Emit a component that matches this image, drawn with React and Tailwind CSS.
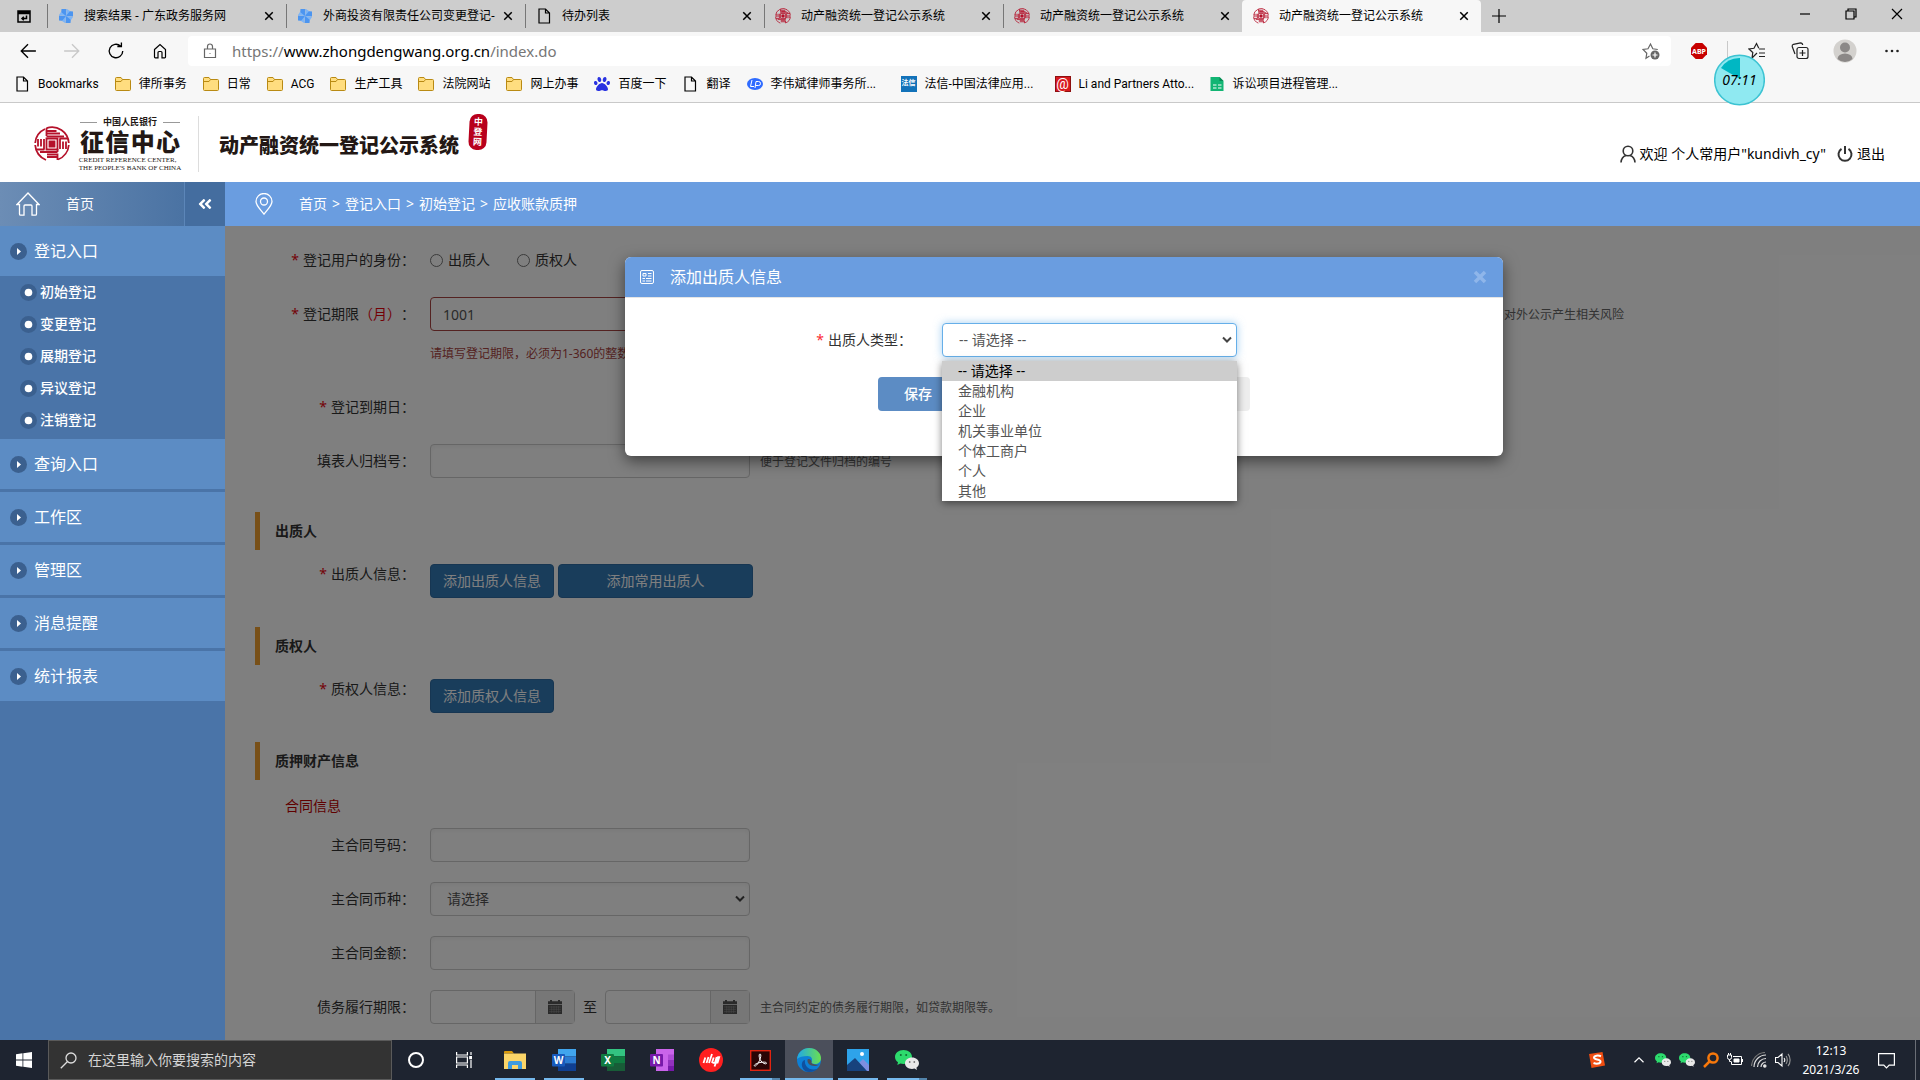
import { useState } from "react";
import clsx from "clsx";
import { FaAngleDoubleLeft, FaPaw } from "react-icons/fa";

const ICON_PATHS = {
  back: "M15 8H2M8 2L2 8l6 6",
  forward: "M1 8h13M8 2l6 6-6 6",
  plus: "M8 1v14M1 8h14",
  close: "M3 3l10 10M13 3L3 13",
  minimize: "M3 8h10",
  restore: "M3 5h8v8H3zM5 5V3h8v8h-2",
  home: "M2.5 6.5L8 1.5l5.5 5V14a.8.8 0 0 1-.8.8H10V9.5a1 1 0 0 0-1-1H7a1 1 0 0 0-1 1v5.3H3.3a.8.8 0 0 1-.8-.8z",
  lock: "M2.5 6h11v8.5h-11zM5.5 6V3.5a2.5 2.5 0 0 1 5 0V6M8 10v.8",
  reload: "M14 8a6 6 0 1 1-2-4.5M12.8 0.5v3.5H9.2",
  page: "M3 1h6.5L13.5 5v10H3zM9.5 1v4h4",
  tabs: "M2 3h12v11H2zM2 5.5h12M2 4h12M10.5 7.5v3H6M7.8 8.8L6 10.5l1.8 1.7",
  chevron: "M2 11l6-6 6 6",
};

function Line({ name, className = "size-4", width = 1.2 }) {
  return (
    <svg viewBox="0 0 16 16" className={clsx("shrink-0", className)} fill="none" stroke="currentColor" strokeWidth={width}>
      <path d={ICON_PATHS[name]} />
    </svg>
  );
}

function Emblem({ className = "size-4" }) {
  return (
    <svg viewBox="0 0 36 36" className={clsx("shrink-0", className)} fill="none" stroke="#b5122b" strokeWidth="1.8">
      <path d="M11 3A16.800 16.800 0 0 0 1.200 17M1.200 19A16.800 16.800 0 0 0 12 34M24 33.500A16.800 16.800 0 0 0 34.800 19M34.800 17A16.800 16.800 0 0 0 12.500 2.100" />
      <path d="M12.500 12.500h11v11h-11z" />
      <path d="M15.500 15.500h5v5h-5z" fill="#b5122b" />
      <path d="M12.500 2v5.500H23M12.500 5h10M12.500 10.500H30M26 7.500H15M12.500 10V8" />
      <path d="M25.500 12.500H34M26 12.500V23M29 15.500V23M32 15.500V23" />
      <path d="M23.500 34v-5.500H13M23.500 31H13M23.500 26H6M23.500 23v3" />
      <path d="M10.500 23.500H2M10 23.500V13M7 20.500V13M4 20.500V13" />
    </svg>
  );
}

function Pinwheel() {
  return (
    <svg viewBox="0 0 16 16" className="size-4 shrink-0">
      <g fill="#4c95f0">
        <path d="M3.500 1h5L8 8 3 6zM15 3.500v5L8 8l2-5zM12.500 15h-5L8 8l5 2zM1 12.500v-5L8 8l-2 5z" />
      </g>
      <g fill="#7db5f7">
        <path d="M9 1l3 2L8 8zM15 9l-2 3L8 8zM7 15l-3-2L8 8zM1 7l2-3L8 8z" />
      </g>
    </svg>
  );
}

function Folder() {
  return (
    <svg viewBox="0 0 16 16" className="size-4 shrink-0" stroke="#b98a13" strokeWidth="1">
      <path d="M.5 2.500A1 1 0 0 1 1.500 1.500h4.500l1.500 2h7a1 1 0 0 1 1 1v9a1 1 0 0 1-1 1h-13a1 1 0 0 1-1-1z" fill="#ffdd7f" />
      <path d="M1 5.500h5l1.500-2" fill="none" />
    </svg>
  );
}

function BookmarkIcon({ kind }) {
  if (kind === "folder") return <Folder />;
  if (kind === "page") return <Line name="page" />;
  if (kind === "baidu") return <FaPaw className="size-4 shrink-0 text-[#2932e1]" />;
  if (kind === "lp")
    return (
      <svg viewBox="0 0 16 16" className="size-4 shrink-0">
        <ellipse cx="8" cy="8" rx="8" ry="6" fill="#2f6bff" />
        <path d="M5 4L3.500 10.500H7M8 12l1-6.500h2.500a1.500 1.500 0 0 1 0 4H8.500" stroke="#fff" fill="none" />
      </svg>
    );
  if (kind === "faxin")
    return <span className="flex size-4 shrink-0 items-center justify-center bg-[#1272b9] text-[7px] font-bold text-white">法信</span>;
  if (kind === "at")
    return <span className="flex size-4 shrink-0 items-center justify-center border border-[#8d1010] bg-[#d8191f] text-sm leading-none text-white">@</span>;
  return (
    <svg viewBox="0 0 16 16" className="size-4 shrink-0">
      <path d="M1.500 1h9l4 4v10h-13z" fill="#12b573" />
      <path d="M10.500 1l4 4h-4z" fill="#078a54" />
      <path d="M4 9h3.500M9 9h3.500M4 12h3.500M9 12h3.500" stroke="#fff" />
    </svg>
  );
}

const tabs = [
  { title: "搜索结果 - 广东政务服务网", icon: "pin" },
  { title: "外商投资有限责任公司变更登记-", icon: "pin" },
  { title: "待办列表", icon: "page" },
  { title: "动产融资统一登记公示系统", icon: "emblem" },
  { title: "动产融资统一登记公示系统", icon: "emblem" },
  { title: "动产融资统一登记公示系统", icon: "emblem", active: true },
];

const bookmarks = [
  ["page", "Bookmarks"],
  ["folder", "律所事务"],
  ["folder", "日常"],
  ["folder", "ACG"],
  ["folder", "生产工具"],
  ["folder", "法院网站"],
  ["folder", "网上办事"],
  ["baidu", "百度一下"],
  ["page", "翻译"],
  ["lp", "李伟斌律师事务所..."],
  ["faxin", "法信-中国法律应用..."],
  ["at", "Li and Partners Atto..."],
  ["sheet", "诉讼项目进程管理..."],
];

function TabStrip() {
  return (
    <div className="flex h-8 items-stretch bg-[#cdcdcd]">
      <button aria-label="标签操作" className="flex w-[47px] items-center justify-center">
        <Line name="tabs" width={1.5} />
      </button>
      {tabs.map((tab, i) => (
        <div
          key={i}
          className={clsx("flex w-[239px] min-w-0 items-center", tab.active && "rounded-t bg-[#f7f7f7]")}
        >
          <div className={clsx("flex h-6 w-full min-w-0 items-center border-l pr-[7px] pl-[10px]", tab.active ? "border-transparent" : "border-[#777]")}>
            {tab.icon === "pin" && <Pinwheel />}
            {tab.icon === "page" && <Line name="page" />}
            {tab.icon === "emblem" && <Emblem />}
            <span className="ml-[10px] flex-1 text-xs whitespace-nowrap">{tab.title}</span>
            <button aria-label="关闭标签" className="flex size-5 shrink-0 items-center justify-center">
              <Line name="close" className="size-3" width={2} />
            </button>
          </div>
        </div>
      ))}
      <button aria-label="新标签" className="flex w-9 items-center justify-center">
        <Line name="plus" />
      </button>
      <div className="ml-auto flex h-7 items-center">
        <button aria-label="最小化" className="flex w-[46px] justify-center"><Line name="minimize" /></button>
        <button aria-label="还原" className="flex w-[46px] justify-center"><Line name="restore" /></button>
        <button aria-label="关闭" className="flex w-[46px] justify-center"><Line name="close" /></button>
      </div>
    </div>
  );
}

function Toolbar() {
  return (
    <div className="relative flex h-[38px] items-center bg-[#f7f7f7] pl-[6px]">
      <button aria-label="后退" className="flex w-11 justify-center"><Line name="back" className="size-[18px]" /></button>
      <button aria-label="前进" className="flex w-11 justify-center text-[#c8c8c8]"><Line name="forward" className="size-[18px]" /></button>
      <button aria-label="刷新" className="flex w-11 justify-center"><Line name="reload" className="size-[18px]" /></button>
      <button aria-label="主页" className="flex w-11 justify-center"><Line name="home" /></button>
      <div className="ml-[6px] flex h-[30px] flex-1 items-center rounded bg-white pr-[11px] pl-[14px]">
        <Line name="lock" className="size-4 text-[#666]" />
        <a href="https://www.zhongdengwang.org.cn/index.do" className="ml-[14px] text-[15px] text-[#767676]">
          https://<span className="text-black">www.zhongdengwang.org.cn</span>/index.do
        </a>
        <svg viewBox="0 0 18 18" className="ml-auto size-[18px]" fill="none" stroke="#666" strokeWidth="1.2">
          <path d="M7.500 14L4 16.200l.8-5L1 7.500l5-.7L8.500 2l2.300 4.800 5 .7" />
          <circle cx="13" cy="13" r="4.500" fill="#666" stroke="none" />
          <path d="M13 10.500v5M10.500 13h5" stroke="#fff" />
        </svg>
      </div>
      <div className="flex w-[249px] items-center">
        <svg viewBox="0 0 16 16" className="ml-5 size-4">
          <path d="M4.700 0h6.600L16 4.700v6.600L11.300 16H4.700L0 11.300V4.700z" fill="#c70000" />
          <text x="8" y="11" textAnchor="middle" fontSize="7" fontWeight="700" fill="#fff">ABP</text>
        </svg>
        <span className="ml-5 h-5 w-px bg-[#c9c9c9]" />
        <svg viewBox="0 0 18 18" className="ml-5 size-[18px]" fill="none" stroke="#222" strokeWidth="1.2">
          <path d="M9 11l-5 5 .8-5.500L1 7l5-.7L8.500 1.500l2.300 4.800M11 7h6M11 11h6M11 14.500h6" />
        </svg>
        <svg viewBox="0 0 18 18" className="ml-[25px] size-[18px]" fill="none" stroke="#222" strokeWidth="1.2">
          <rect x="6" y="5.500" width="11" height="11" rx="2" />
          <path d="M11.500 8v6M8.500 11h6M4 12L1.200 4.500a2 2 0 0 1 1.300-2.200l7-1.500c1 0 2 .5 2.200 2.200" />
        </svg>
        <svg viewBox="0 0 24 24" className="ml-6 size-6">
          <circle cx="12" cy="12" r="11.500" fill="#d3d1ce" />
          <circle cx="12" cy="8.500" r="5" fill="#8b8887" />
          <path d="M4.500 20a7.500 5.500 0 0 1 15 0 11 11 0 0 1-15 0z" fill="#8b8887" />
        </svg>
        <svg viewBox="0 0 16 16" className="ml-[27px] size-4" fill="#222">
          <circle cx="2.500" cy="8" r="1.300" /><circle cx="8" cy="8" r="1.300" /><circle cx="13.500" cy="8" r="1.300" />
        </svg>
      </div>
      {/* floating countdown */}
      <div className="absolute top-[22px] right-[155px] z-30 flex h-[52px] w-[51px] items-center justify-center">
        <svg viewBox="0 0 51 52" className="absolute inset-0 h-full w-full">
          <circle cx="25.500" cy="26" r="24.800" fill="#8fe9f1" stroke="#3cc3d2" strokeWidth="1.500" />
          <path d="M26 25V4A22 22 0 0 0 7 14z" fill="#00b7c3" />
        </svg>
        <span className="relative text-sm leading-4 italic">07:11</span>
      </div>
    </div>
  );
}

function Bookmarks() {
  return (
    <nav className="flex h-[33px] items-center gap-4 border-b border-[#c9c9c9] bg-[#f7f7f7] pb-1 pl-[14px] [font-family:Roboto,'Noto_Sans_CJK_SC',sans-serif]">
      {bookmarks.map(([kind, label]) => (
        <a key={label} href="#" className="flex items-center gap-2 text-xs whitespace-nowrap">
          <BookmarkIcon kind={kind} />
          <span className={clsx(label.endsWith("...") && "w-[114px]")}>{label}</span>
        </a>
      ))}
    </nav>
  );
}

function SiteHeader() {
  return (
    <header className="flex h-[79px] items-center bg-white pt-[3px] pr-[35px] pl-[34px]">
      <Emblem className="size-9" />
      <div className="ml-[10px] flex w-[100px] flex-col items-center text-[#231815]">
        <div className="flex w-full items-center gap-[6px] text-[9px] leading-3 font-bold">
          <span className="h-px flex-1 bg-[#999]" />中国人民银行<span className="h-px flex-1 bg-[#999]" />
        </div>
        <div className="flex w-full justify-between text-2xl leading-[28px] font-black">
          <span>征</span><span>信</span><span>中</span><span>心</span>
        </div>
        <div className="[font-family:'Liberation_Serif',serif] text-[7px] leading-[8px] font-medium whitespace-nowrap">
          CREDIT REFERENCE CENTER,
          <br />
          THE PEOPLE'S BANK OF CHINA
        </div>
      </div>
      <span className="ml-[18px] h-14 w-px bg-[#ddd]" />
      <h1 className="mt-1 ml-5 text-xl font-black text-[#231815]">动产融资统一登记公示系统</h1>
      <div className="mb-6 ml-[10px] flex h-9 w-[18px] rotate-3 flex-col items-center justify-center rounded-[8px] bg-[#b8001c] text-[9px] leading-[10px] font-bold text-white">
        <span>中</span><span>登</span><span>网</span>
      </div>
      <div className="mt-5 ml-auto flex items-center text-sm">
        <svg viewBox="0 0 16 18" className="mr-1 h-[18px] w-4" fill="none" stroke="#333" strokeWidth="1.6">
          <circle cx="8" cy="6" r="4.800" />
          <path d="M1 17.500c.3-4 2.500-6.300 5-7M15 17.500c-.3-4-2.500-6.300-5-7" />
        </svg>
        欢迎 个人常用户"kundivh_cy"
        <a href="#" className="ml-[11px] flex items-center gap-1">
          <svg viewBox="0 0 16 16" className="size-4" fill="none" stroke="#333" strokeWidth="2">
            <path d="M4.500 2.800a6.500 6.500 0 1 0 7 0M8 0v8" />
          </svg>
          退出
        </a>
      </div>
    </header>
  );
}

const subItems = ["初始登记", "变更登记", "展期登记", "异议登记", "注销登记"];

function MenuItem({ label }) {
  return (
    <a href="#" className="flex h-[50px] items-center gap-[7px] bg-[#5c8cc4] pl-[10px] text-base text-white">
      <svg viewBox="0 0 17 17" className="size-[17px]">
        <circle cx="8.500" cy="8.500" r="8.500" fill="#3b608f" />
        <path d="M7 5l4 3.500L7 12z" fill="#fff" />
      </svg>
      {label}
    </a>
  );
}

function Sidebar() {
  return (
    <aside className="w-[225px] shrink-0 bg-[#4a74a8]">
      <div className="flex h-11 items-center bg-linear-to-r from-[#6c8db5] to-[#436d9f] text-sm text-white">
        <a href="#" className="flex flex-1 items-center gap-[26px] pl-4">
          <svg viewBox="0 0 24 24" className="size-6" fill="none" stroke="#fff" strokeWidth="1.3">
            <path d="M3.500 12.500H1L12 1l11 11.500h-2.500V22a1.200 1.200 0 0 1-1.200 1.200H16V14a1 1 0 0 0-1-1H9a1 1 0 0 0-1 1v9.200H4.700A1.200 1.200 0 0 1 3.500 22z" />
          </svg>
          首页
        </a>
        <button aria-label="收起菜单" className="flex h-full w-[41px] items-center justify-center border-l border-[#5c86b8] bg-[#446d9f]">
          <FaAngleDoubleLeft className="size-4" />
        </button>
      </div>
      <MenuItem label="登记入口" />
      <ul className="pb-[3px]">
        {subItems.map((label) => (
          <li key={label}>
            <a href="#" className="flex h-8 items-center gap-[3px] pl-5 text-sm font-medium text-white">
              <svg viewBox="0 0 17 17" className="size-[17px]">
                <circle cx="8.500" cy="8.500" r="8.500" fill="#3b608f" />
                <circle cx="8.500" cy="8.500" r="3.800" fill="#fff" />
              </svg>
              {label}
            </a>
          </li>
        ))}
      </ul>
      <div className="flex flex-col gap-[3px]">
        {["查询入口", "工作区", "管理区", "消息提醒", "统计报表"].map((label) => (
          <MenuItem key={label} label={label} />
        ))}
      </div>
    </aside>
  );
}

const inputClass = "h-[34px] rounded border border-[#ccc] bg-white px-3 text-sm text-[#555] shadow-inner";

function Row({ label, id, required, children, top }) {
  return (
    <div className={clsx("flex gap-[15px] text-sm text-[#333]", top ? "items-start" : "items-center")}>
      <label htmlFor={id} className={clsx("w-[190px] shrink-0 text-right", top || "leading-[34px]")}>
        {required && <span className="mr-1 text-red-600">*</span>}
        {label}：
      </label>
      {children}
    </div>
  );
}

function Section({ children, className }) {
  return (
    <h2 className={clsx("ml-[30px] flex h-[38px] items-center border-l-[5px] border-[#f0a030] pl-[15px] text-sm font-bold text-[#333]", className)}>
      {children}
    </h2>
  );
}

function SelectArrow({ className }) {
  return (
    <svg viewBox="0 0 10 8" className={clsx("pointer-events-none absolute h-2 w-[10px]", className)} fill="none" stroke="#444" strokeWidth="2">
      <path d="M1 1.500l4 4 4-4" />
    </svg>
  );
}

function DateField({ id, label }) {
  return (
    <div className="flex h-[34px] rounded border border-[#ccc]">
      <input id={id} aria-label={label} className="w-[104px] px-3" />
      <button aria-label="选择日期" className="flex w-[39px] items-center justify-center border-l border-[#ccc] bg-[#eee]">
        <svg viewBox="0 0 14 14" className="size-[14px]">
          <path d="M0 1.200h2V0h2v1.200h6V0h2v1.200h2V4H0zM0 4.700h14V14H0z" fill="#555" />
          <path d="M1 7h12M1 9.300h12M1 11.600h12M3.700 6v7M6 6v7M8.300 6v7M10.600 6v7" stroke="#999" strokeWidth=".5" />
        </svg>
      </button>
    </div>
  );
}

const primaryBtn = "h-[34px] rounded border border-[#2e6da4] bg-[#337ab7] text-sm text-white";

function RegisterForm() {
  return (
    <form className="pt-[17px] pb-4" onSubmit={(e) => e.preventDefault()}>
      <div className="flex flex-col gap-5">
        <Row label="登记用户的身份" required>
          <label className="flex items-center gap-[5px]">
            <input type="radio" name="role" className="size-[13px]" />出质人
          </label>
          <label className="ml-3 flex items-center gap-[5px]">
            <input type="radio" name="role" className="size-[13px]" />质权人
          </label>
        </Row>
        <div>
          <Row label={<>登记期限<span className="text-red-600">（月）</span></>} id="term" required>
            <input id="term" defaultValue="1001" className="h-[34px] w-[320px] rounded border border-[#a94442] px-3 text-sm text-[#555]" />
            <span className="w-[859px] pt-[2px] text-right text-xs text-[#666]">对外公示产生相关风险</span>
          </Row>
          <p className="ml-[205px] flex h-[39px] items-center pt-[6px] text-xs text-[#a94442]">请填写登记期限，必须为1-360的整数</p>
        </div>
        <Row label="登记到期日" required />
        <div className="flex items-center gap-[10px]">
          <Row label="填表人归档号" id="archive">
            <input id="archive" className={clsx(inputClass, "w-[320px]")} />
          </Row>
          <span className="pt-[2px] text-xs text-[#666]">便于登记文件归档的编号</span>
        </div>
      </div>

      <Section className="mt-[34px] mb-[14px]">出质人</Section>
      <Row label="出质人信息" required top>
        <div className="flex gap-1">
          <button className={clsx(primaryBtn, "w-[124px]")}>添加出质人信息</button>
          <button className={clsx(primaryBtn, "w-[195px]")}>添加常用出质人</button>
        </div>
      </Row>

      <Section className="mt-[29px] mb-[14px]">质权人</Section>
      <Row label="质权人信息" required top>
        <button className={clsx(primaryBtn, "w-[124px]")}>添加质权人信息</button>
      </Row>

      <Section className="mt-[29px]">质押财产信息</Section>
      <h3 className="ml-[60px] flex h-12 items-center pt-1 text-sm text-[#c00000]">合同信息</h3>
      <div className="flex flex-col gap-5">
        <Row label="主合同号码" id="contractNo">
          <input id="contractNo" className={clsx(inputClass, "w-[320px]")} />
        </Row>
        <Row label="主合同币种" id="currency">
          <div className="relative">
            <select id="currency" className={clsx(inputClass, "w-[320px] appearance-none pl-4")}>
              <option>请选择</option>
            </select>
            <SelectArrow className="top-[13px] right-[5px]" />
          </div>
        </Row>
        <Row label="主合同金额" id="amount">
          <input id="amount" className={clsx(inputClass, "w-[320px]")} />
        </Row>
        <Row label="债务履行期限" id="from">
          <div className="flex items-center">
            <DateField id="from" label="开始日期" />
            <span className="mx-2">至</span>
            <DateField id="to" label="结束日期" />
            <span className="ml-[10px] pt-[2px] text-xs text-[#666]">主合同约定的债务履行期限，如贷款期限等。</span>
          </div>
        </Row>
      </div>
    </form>
  );
}

const pledgorTypes = ["-- 请选择 --", "金融机构", "企业", "机关事业单位", "个体工商户", "个人", "其他"];

function PledgorModal() {
  const [type, setType] = useState(pledgorTypes[0]);

  return (
    <div className="absolute inset-0 flex items-start justify-center bg-black/50 pt-[31px] pr-[17px]">
      <div role="dialog" aria-label="添加出质人信息" className="w-[878px] rounded-md bg-white shadow-[0_5px_15px_rgba(0,0,0,0.5)]">
        <div className="flex h-10 items-center rounded-t-md bg-[#6a9de0] px-[15px] text-base text-white">
          <svg viewBox="0 0 14 14" className="mr-4 size-[14px]" fill="none" stroke="#fff">
            <rect x=".5" y=".5" width="13" height="13" rx="1.5" />
            <path d="M3 3.500h3v2.500H3zM8 3.500h3.500M8 6h3.500M2.500 8.500H5M6 8.500h5.500M2.500 11H5M6 11h5.500" />
          </svg>
          添加出质人信息
          <button aria-label="关闭对话框" className="ml-auto text-[#8fb6ea]">
            <Line name="close" width={3.5} />
          </button>
        </div>
        <div className="h-[159px] border-t border-[#e5e5e5] pt-[25px]">
          <div className="flex items-center text-sm text-[#333]">
            <label htmlFor="pledgorType" className="w-[287px] text-right">
              <span className="mr-1 text-red-500">*</span>出质人类型：
            </label>
            <div className="relative ml-[30px]">
              <select
                id="pledgorType"
                value={type}
                onChange={(e) => setType(e.target.value)}
                className="block h-[34px] w-[295px] appearance-none rounded border border-[#66afe9] bg-white px-4 text-sm text-[#555] shadow-[0_0_8px_rgba(102,175,233,0.6)]"
              >
                {pledgorTypes.map((t) => (
                  <option key={t}>{t}</option>
                ))}
              </select>
              <SelectArrow className="top-[13px] right-[5px]" />
              <ul className="absolute top-[38px] left-0 z-10 w-full bg-white text-sm leading-5 text-[#555] shadow-[0_2px_8px_rgba(0,0,0,0.5)]">
                {pledgorTypes.map((t) => (
                  <li key={t} onClick={() => setType(t)} className={clsx("px-4", t === type && "bg-[#cdcdcd] text-black")}>
                    {t}
                  </li>
                ))}
              </ul>
            </div>
          </div>
          <div className="mt-5 ml-[253px] flex w-[372px] justify-between text-sm">
            <button className="h-[34px] w-20 rounded bg-[#5c8cc4] font-medium text-white">保存</button>
            <button aria-label="取消" className="h-[34px] w-20 rounded bg-[#eee]" />
          </div>
        </div>
      </div>
    </div>
  );
}

function Office({ letter, light, mid, dark, badge }) {
  return (
    <svg viewBox="0 0 24 22" className="h-[22px] w-6">
      <path d="M6 0h18v7.300H6z" fill={light} />
      <path d="M6 7.300h18v7.400H6z" fill={mid} />
      <path d="M6 14.700h18V22H6z" fill={dark} />
      <rect y="5" width="13" height="12.500" rx="1" fill={badge} />
      <text x="6.500" y="15" textAnchor="middle" fontSize="10" fontWeight="700" fill="#fff">{letter}</text>
    </svg>
  );
}

function WeChat({ className }) {
  return (
    <svg viewBox="0 0 24 20" className={className}>
      <path d="M8.500 0C3.500 0 0 3.200 0 7c0 2.200 1.200 4 3 5.300L2.300 15l3-1.500c1 .3 2 .5 3.200.5 5 0 8.500-3 8.500-7s-3.500-7-8.500-7z" fill="#2ddb6d" />
      <circle cx="5.800" cy="5" r="1" fill="#116b32" /><circle cx="11.200" cy="5" r="1" fill="#116b32" />
      <path d="M17 7.500c-4 0-7 2.600-7 5.800S13 19 17 19c.9 0 1.700-.1 2.500-.4L22 20l-.6-2.300c1.600-1 2.600-2.600 2.600-4.400 0-3.200-3-5.800-7-5.800z" fill="#e9e9e9" />
      <circle cx="14.700" cy="12" r=".9" fill="#777" /><circle cx="19.300" cy="12" r=".9" fill="#777" />
    </svg>
  );
}

const apps = [
  {
    name: "文件资源管理器",
    open: true,
    icon: (
      <svg viewBox="0 0 22 19" className="h-[19px] w-[22px]">
        <path d="M0 1a1 1 0 0 1 1-1h7l2 2.500H0z" fill="#d99a0b" />
        <path d="M0 2.500h22V18H0z" fill="#fbd568" />
        <path d="M4 18v-6a2 2 0 0 1 2-2h10a2 2 0 0 1 2 2v6h-4v-4H8v4z" fill="#3d9be0" />
      </svg>
    ),
  },
  { name: "Word", open: true, icon: <Office letter="W" light="#41a5ee" mid="#2b7cd3" dark="#103f91" badge="#185abd" /> },
  { name: "Excel", icon: <Office letter="X" light="#33c481" mid="#107c41" dark="#185c37" badge="#107c41" /> },
  {
    name: "OneNote",
    icon: (
      <svg viewBox="0 0 24 22" className="h-[22px] w-6">
        <path d="M6 0h18v22H6z" fill="#ca64ea" />
        <path d="M18 5.500h6V11h-6z" fill="#ae4bd5" />
        <path d="M18 11h6v5.500h-6z" fill="#9332bf" />
        <path d="M18 16.500h6V22h-6z" fill="#7719aa" />
        <rect y="5" width="13" height="12.500" rx="1" fill="#7719aa" />
        <text x="6.500" y="15" textAnchor="middle" fontSize="10" fontWeight="700" fill="#fff">N</text>
      </svg>
    ),
  },
  {
    name: "红圈",
    icon: (
      <svg viewBox="0 0 24 24" className="size-6">
        <circle cx="12" cy="12" r="12" fill="#ff1f1f" />
        <path d="M4.500 15l1.800-5.500M7.500 15l2-6M10 15l3-9M13 15l1.700-5.500M13.500 14.800h2.500l1.700-5.800M15.500 18.500L19 9.200h1.200l-1.600 5.300h-1" stroke="#fff" strokeWidth="1.800" fill="none" />
      </svg>
    ),
  },
  {
    name: "Acrobat",
    open: true,
    stacked: true,
    icon: (
      <svg viewBox="0 0 21 21" className="size-[21px]">
        <rect x=".7" y=".7" width="19.600" height="19.600" fill="#2a0505" stroke="#e02411" strokeWidth="1.400" />
        <path d="M10 4c1.500 0 .8 3.500-.5 6.500S5.500 17 4.500 16s2-2.800 5.500-3.500 7-.5 6.500.8-3.500.2-5.500-2.300S8.500 4 10 4z" fill="none" stroke="#fff" />
      </svg>
    ),
  },
  {
    name: "Edge",
    open: true,
    active: true,
    icon: (
      <svg viewBox="0 0 24 24" className="size-6">
        <defs>
          <linearGradient id="edgeTop" x1="0" x2="1">
            <stop offset="0" stopColor="#1fa7e8" />
            <stop offset="1" stopColor="#6be04f" />
          </linearGradient>
        </defs>
        <circle cx="12" cy="12" r="12" fill="#0d7fd6" />
        <path d="M0 11C1 4 6 0 12 0c7 0 12 5 12 10 0 4-3 6-6 6-3 0-4-1-3.500-2 1.500-3 0-6-4-6C6 8 2 9 0 11z" fill="url(#edgeTop)" />
        <path d="M8 12c-1 5 3 10 9 9.500 2 0 4-1 5-2C20 22 16 24 12 24 7 24 4 19 5 15c.5-2 2-3 3-3z" fill="#10509f" />
        <path d="M10.500 12c-.5 3 2.500 6 7 6 2 0 4-.7 5-1.500-1 .3-3 .5-4.500 0-2.500-.5-4-1.500-3.500-2.500.8-2-3.500-4.500-4-2z" fill="#4b4f5b" />
      </svg>
    ),
  },
  {
    name: "照片",
    open: true,
    icon: (
      <svg viewBox="0 0 22 22" className="size-[22px]">
        <path d="M0 0h22v22H0z" fill="#2ea3ea" />
        <path d="M12 14l4-4 6 6v6H12z" fill="#7d8ee0" />
        <path d="M0 16l8-7 12 13H0z" fill="#17427d" />
        <circle cx="15" cy="5" r="2" fill="#fff" />
      </svg>
    ),
  },
  { name: "微信", open: true, stacked: true, icon: <WeChat className="h-5 w-6" /> },
];

function Taskbar() {
  return (
    <footer className="flex h-10 items-stretch bg-[#1e2430] text-white">
      <button aria-label="开始" className="flex w-12 items-center justify-center">
        <svg viewBox="0 0 16 16" className="size-4" fill="#fff">
          <path d="M0 2.200L6.500 1.300v6.300H0zM7.300 1.200L16 0v7.600H7.300zM0 8.400h6.500v6.300L0 13.800zM7.300 8.400H16V16l-8.700-1.200z" />
        </svg>
      </button>
      <div className="flex w-[344px] items-center border border-[#5a5a5a] bg-[#333] pl-[11px]">
        <svg viewBox="0 0 17 17" className="size-[17px]" fill="none" stroke="#ddd" strokeWidth="1.3">
          <circle cx="11" cy="6" r="5" /><path d="M7.500 9.500L.8 16.200" />
        </svg>
        <input aria-label="搜索" placeholder="在这里输入你要搜索的内容" className="ml-[11px] w-60 bg-transparent text-sm placeholder:text-[#d5d5d5]" />
      </div>
      <button aria-label="Cortana" className="flex w-12 items-center justify-center">
        <span className="size-4 rounded-full border-2 border-white" />
      </button>
      <button aria-label="任务视图" className="flex w-12 items-center justify-center">
        <svg viewBox="0 0 16 16" className="size-4" fill="none" stroke="#fff" strokeWidth="1.2">
          <path d="M.6 0v3h10.800V0M.6 16v-3h10.800v3M.6 5h10.800v6H.6zM15 0v3M15 8v8" /><path d="M13.800 4.500h2.200v2.200h-2.200z" fill="#fff" />
        </svg>
      </button>
      <div className="ml-[3px] flex gap-px">
        {apps.map((app) => (
          <button
            key={app.name}
            aria-label={app.name}
            className={clsx("relative flex w-12 items-center justify-center", app.active && "bg-[#4b4f5b]")}
          >
            {app.icon}
            {app.open && (
              <span className={clsx("absolute bottom-0 h-[2px] bg-[#76b9ed]", app.active ? "inset-x-0" : "inset-x-1", app.stacked && "border-r-8 border-[#5384ab]")} />
            )}
          </button>
        ))}
      </div>
      <div className="ml-auto flex items-center">
        <svg viewBox="0 0 16 16" className="mr-[26px] size-4">
          <path d="M0 2L13.500 0 16 13.500 2.500 16z" fill="#f04e11" />
          <path d="M12 4.200C9 3 5 3.500 5 5.800c0 2.200 6.500 1.200 6.500 3.700 0 2.300-4 2.800-7 1.500" stroke="#fff" strokeWidth="2" fill="none" />
        </svg>
        <div className="flex items-center gap-2">
          <span className="flex w-4 justify-center"><Line name="chevron" className="size-3" width={1.6} /></span>
          <WeChat className="h-[14px] w-4" />
          <WeChat className="h-[14px] w-4" />
          <svg viewBox="0 0 16 16" className="size-4" fill="none" stroke="#f7780b" strokeWidth="2.5">
            <circle cx="10" cy="6" r="4.600" /><path d="M6.500 9.500L1 15" />
          </svg>
          <svg viewBox="0 0 16 16" className="size-4" fill="none" stroke="#fff">
            <path d="M6 4.500h8.500v8H4.500V10M15.500 7v3M.5 3h4v2.500a2 2 0 0 1-4 0zM1.500 1v2M3.500 1v2M2.500 7.500v2h2" /><path d="M7 7h5v3H7z" fill="#fff" />
          </svg>
          <svg viewBox="0 0 16 16" className="size-4" fill="none" stroke="#ddd" strokeWidth="1.2">
            <path d="M3 15A12 12 0 0 1 15 3M6.500 15A8.500 8.500 0 0 1 15 6.500M10 15a5 5 0 0 1 5-5" /><path d="M.5 14A14 14 0 0 1 14 .5" stroke="#777" /><circle cx="13.800" cy="14" r="1.200" fill="#fff" />
          </svg>
          <svg viewBox="0 0 16 16" className="size-4" fill="none" stroke="#fff" strokeWidth="1.1">
            <path d="M.5 5.500h2.500L7 2v12L3 10.500H.5zM9 6c.8 1 .8 3 0 4" /><path d="M11 4c1.700 2 1.700 6 0 8M13 2c2.800 3 2.800 9 0 12" stroke="#999" />
          </svg>
        </div>
        <div className="ml-[9px] w-[62px] text-center text-xs leading-[19px]">
          12:13
          <br />
          2021/3/26
        </div>
        <button aria-label="通知" className="ml-4 flex w-[18px]">
          <svg viewBox="0 0 17 17" className="size-[17px]" fill="none" stroke="#fff" strokeWidth="1.2">
            <path d="M.6 1.600h15.800v11.600h-5.200L8.500 16l-2.700-2.800H.6z" />
          </svg>
        </button>
        <span className="mr-1 ml-[19px] h-10 w-px bg-[#6a6e76]" />
      </div>
    </footer>
  );
}

const crumbs = ["首页", "登记入口", "初始登记", "应收账款质押"];

export default function App() {
  return (
    <div className="flex min-h-screen flex-col bg-white leading-5 text-black [font-family:'Noto_Sans','Noto_Sans_CJK_SC',sans-serif] [text-spacing-trim:space-all]">
      <TabStrip />
      <Toolbar />
      <Bookmarks />
      <SiteHeader />
      <div className="flex flex-1">
        <Sidebar />
        <div className="flex min-w-0 flex-1 flex-col">
          <div className="flex h-11 items-center bg-[#6a9de0] pl-[30px] text-sm text-white">
            <svg viewBox="0 0 18 22" className="mr-[26px] h-[22px] w-[18px]" fill="none" stroke="#fff" strokeWidth="1.3">
              <path d="M9 21.200C5 16 1 12.500 1 8.500a8 8 0 0 1 16 0c0 4-4 7.500-8 12.700z" /><circle cx="9" cy="8.500" r="3.500" />
            </svg>
            <nav className="flex gap-[5px]">
              {crumbs.map((crumb, i) => (
                <span key={crumb} className="flex gap-[5px]">
                  {i > 0 && <span>&gt;</span>}
                  <a href="#">{crumb}</a>
                </span>
              ))}
            </nav>
          </div>
          <main className="relative flex-1">
            <RegisterForm />
            <PledgorModal />
          </main>
        </div>
      </div>
      <Taskbar />
    </div>
  );
}
